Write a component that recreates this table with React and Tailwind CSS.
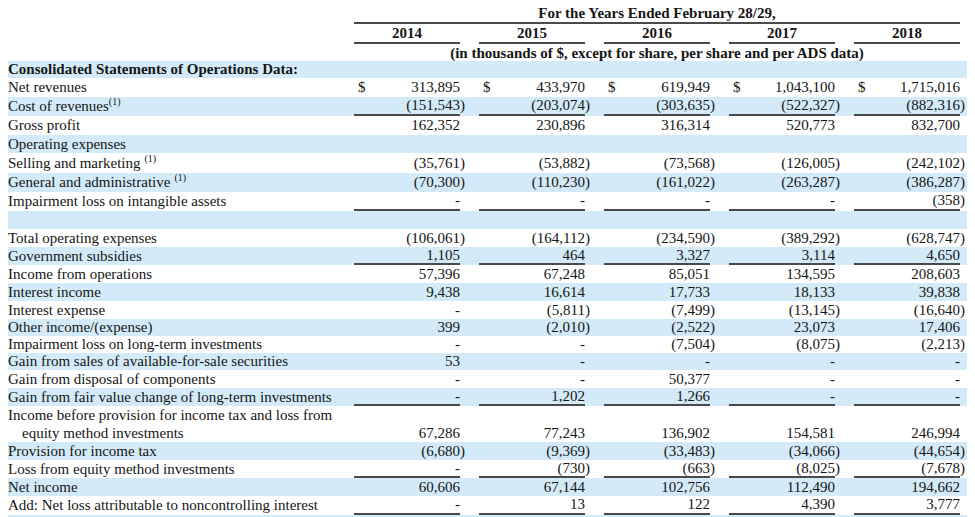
const BLUE = 'bg-[#d3ebf8]'
const LINE = 'border-b-2 border-[#4a4a4a]'

const HEIGHTS = {
  17: 'h-[17px]',
  18: 'h-[18px]',
  19: 'h-[19px]',
  20: 'h-[20px]',
  36: 'h-[36px]',
}

const rows = [
  { label: 'Consolidated Statements of Operations Data:', bold: true, h: 17, blue: true },
  { label: 'Net revenues', dollar: true, h: 19, vals: ['313,895', '433,970', '619,949', '1,043,100', '1,715,016'] },
  { label: 'Cost of revenues', sup: '(1)', h: 19, blue: true, line: true, vals: ['(151,543)', '(203,074)', '(303,635)', '(522,327)', '(882,316)'] },
  { label: 'Gross profit', h: 19, vals: ['162,352', '230,896', '316,314', '520,773', '832,700'] },
  { label: 'Operating expenses', h: 18, blue: true },
  { label: 'Selling and marketing', sup: '(1)', supGap: true, h: 20, vals: ['(35,761)', '(53,882)', '(73,568)', '(126,005)', '(242,102)'] },
  { label: 'General and administrative', sup: '(1)', supGap: true, h: 19, blue: true, vals: ['(70,300)', '(110,230)', '(161,022)', '(263,287)', '(386,287)'] },
  { label: 'Impairment loss on intangible assets', h: 19, line: true, vals: ['-', '-', '-', '-', '(358)'] },
  { label: '', h: 18, blue: true },
  { label: 'Total operating expenses', h: 18, vals: ['(106,061)', '(164,112)', '(234,590)', '(389,292)', '(628,747)'] },
  { label: 'Government subsidies', h: 18, blue: true, line: true, vals: ['1,105', '464', '3,327', '3,114', '4,650'] },
  { label: 'Income from operations', h: 18, vals: ['57,396', '67,248', '85,051', '134,595', '208,603'] },
  { label: 'Interest income', h: 18, blue: true, vals: ['9,438', '16,614', '17,733', '18,133', '39,838'] },
  { label: 'Interest expense', h: 18, vals: ['-', '(5,811)', '(7,499)', '(13,145)', '(16,640)'] },
  { label: 'Other income/(expense)', h: 17, blue: true, vals: ['399', '(2,010)', '(2,522)', '23,073', '17,406'] },
  { label: 'Impairment loss on long-term investments', h: 17, vals: ['-', '-', '(7,504)', '(8,075)', '(2,213)'] },
  { label: 'Gain from sales of available-for-sale securities', h: 17, blue: true, vals: ['53', '-', '-', '-', '-'] },
  { label: 'Gain from disposal of components', h: 18, vals: ['-', '-', '50,377', '-', '-'] },
  { label: 'Gain from fair value change of long-term investments', h: 18, blue: true, line: true, vals: ['-', '1,202', '1,266', '-', '-'] },
  {
    label: 'Income before provision for income tax and loss from',
    label2: 'equity method investments',
    h: 36,
    vals: ['67,286', '77,243', '136,902', '154,581', '246,994'],
  },
  { label: 'Provision for income tax', h: 18, blue: true, vals: ['(6,680)', '(9,369)', '(33,483)', '(34,066)', '(44,654)'] },
  { label: 'Loss from equity method investments', h: 18, line: true, vals: ['-', '(730)', '(663)', '(8,025)', '(7,678)'] },
  { label: 'Net income', h: 18, blue: true, vals: ['60,606', '67,144', '102,756', '112,490', '194,662'] },
  { label: 'Add: Net loss attributable to noncontrolling interest', h: 19, line: true, vals: ['-', '13', '122', '4,390', '3,777'] },
]

const YEARS = ['2014', '2015', '2016', '2017', '2018']

export default function App() {
  return (
    <div
      className="w-[975px] h-[517px] overflow-hidden bg-white text-[15px] leading-none text-[#151515]"
      style={{ fontFamily: "'Liberation Serif', 'Times New Roman', serif" }}
    >
      <div className="ml-[8px] w-[959px]">
        {/* Header */}
        <div className="flex h-[24px] font-bold">
          <div className="w-[346px] shrink-0" />
          <div className={`w-[606px] flex items-center justify-center pt-[4px] ${LINE}`}>
            For the Years Ended February 28/29,
          </div>
        </div>
        <div className="flex h-[20px] font-bold">
          <div className="w-[346px] shrink-0" />
          <div className="flex gap-[19px]">
            {YEARS.map((y) => (
              <div key={y} className={`w-[106px] flex items-center justify-center ${LINE}`}>
                {y}
              </div>
            ))}
          </div>
        </div>
        <div className="flex h-[17px] font-bold">
          <div className="w-[346px] shrink-0" />
          <div className="w-[606px] flex items-center justify-center pt-[1px]">
            (in thousands of $, except for share, per share and per ADS data)
          </div>
        </div>

        {/* Body */}
        {rows.map((r, i) => (
          <Row key={i} r={r} />
        ))}
        <div className={`h-[3px] ${BLUE}`} />
      </div>
    </div>
  )
}

function Row({ r }) {
  const tall = !!r.label2
  return (
    <div className={`flex ${HEIGHTS[r.h]} ${r.blue ? BLUE : ''}`}>
      <div className={`w-[346px] shrink-0 flex flex-col justify-center whitespace-nowrap ${r.bold ? 'font-bold' : ''}`}>
        {tall ? (
          <>
            <div className="h-[18px] flex items-center">{r.label}</div>
            <div className="h-[18px] flex items-center pl-[14px]">{r.label2}</div>
          </>
        ) : (
          <div>
            {r.label}
            {r.sup && (
              <span className={`text-[10px] relative top-[-6px] ${r.supGap ? 'ml-[4px]' : ''}`}>{r.sup}</span>
            )}
          </div>
        )}
      </div>
      {r.vals && (
        <div className="flex gap-[19px]">
          {r.vals.map((v, j) => (
            <div
              key={j}
              className={`w-[106px] h-full flex items-center justify-between pl-[4px] ${tall ? 'pt-[18px]' : ''} ${r.line ? LINE : ''}`}
            >
              <span>{r.dollar ? '$' : ''}</span>
              <Num v={v} />
            </div>
          ))}
        </div>
      )}
    </div>
  )
}

function Num({ v }) {
  if (v.endsWith(')')) {
    return (
      <span className="whitespace-nowrap">
        {v.slice(0, -1)}
        <span className="inline-block w-0">)</span>
      </span>
    )
  }
  return <span className="whitespace-nowrap">{v}</span>
}
